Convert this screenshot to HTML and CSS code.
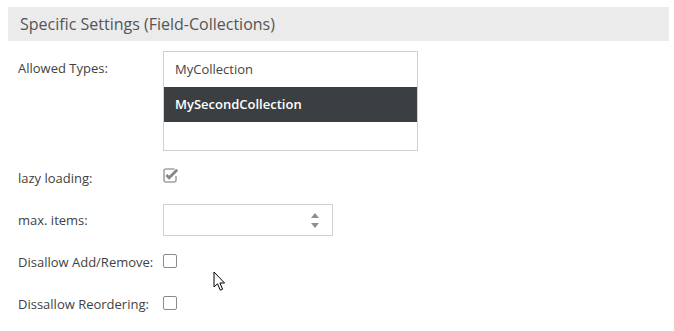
FILE: index.html
```html
<!DOCTYPE html>
<html>
<head>
<meta charset="utf-8">
<link rel="stylesheet" href="styles.css">
</head>
<body>
<div class="panel">
  <div class="panel-header">Specific Settings (Field-Collections)</div>
  <div class="form">
    <div class="row row-list">
      <label class="label label-top">Allowed Types:</label>
      <div class="listbox">
        <div class="option">MyCollection</div>
        <div class="option selected">MySecondCollection</div>
      </div>
    </div>
    <div class="row">
      <label class="label">lazy loading:</label>
      <span class="checkbox checked">
        <svg width="16" height="15" viewBox="0 0 16 15">
          <path d="M11.5 1 H3 A2 2 0 0 0 1 3 V12 A2 2 0 0 0 3 14 H11 A2 2 0 0 0 13 12 V8" fill="none" stroke="#a3a3a3" stroke-width="1.6"/>
          <path d="M3.4 7 L6.2 9.8 L14.2 1.8" fill="none" stroke="#878787" stroke-width="2.8" stroke-linejoin="miter"/>
        </svg>
      </span>
    </div>
    <div class="row">
      <label class="label">max. items:</label>
      <div class="number">
        <span class="spin">
          <svg width="10" height="20" viewBox="0 0 10 20">
            <path d="M5 3 L9 8 L1 8 Z" fill="#8e8e8e"/>
            <path d="M1 13 L9 13 L5 18 Z" fill="#8e8e8e"/>
          </svg>
        </span>
      </div>
    </div>
    <div class="row">
      <label class="label">Disallow Add/Remove:</label>
      <span class="checkbox"></span>
    </div>
    <div class="row">
      <label class="label">Dissallow Reordering:</label>
      <span class="checkbox"></span>
    </div>
  </div>
</div>
<svg class="cursor" width="14" height="22" viewBox="0 0 14 22">
  <path d="M1 1 L1 16 L4.5 12.8 L7.3 19.2 L9.6 18.2 L6.9 12 L11.6 12 Z" fill="#fff" stroke="#000" stroke-width="1" stroke-linejoin="miter"/>
</svg>
</body>
</html>
```

FILE: styles.css
```css
html, body {
  margin: 0;
  padding: 0;
  background: #fff;
}
body {
  padding: 7px 5px 0 8px;
  font-family: "Open Sans", "Liberation Sans", sans-serif;
  font-size: 13px;
  color: #3f3f3f;
  position: relative;
}
.panel-header {
  background: #ebebeb;
  height: 34px;
  line-height: 34px;
  padding-left: 12px;
  font-size: 16px;
  color: #555;
}
.form {
  padding-left: 10px;
}
.row {
  display: flex;
  align-items: center;
  height: 42px;
}
.row-list {
  align-items: flex-start;
  height: 100px;
  margin-top: 10px;
  margin-bottom: 6px;
}
.label {
  width: 145px;
  flex: none;
}
.label-top {
  padding-top: 8px;
}
.listbox {
  width: 253px;
  height: 98px;
  border: 1px solid #d0d0d0;
}
.option {
  height: 35px;
  line-height: 35px;
  padding-left: 11px;
  color: #444;
}
.option.selected {
  background: #3c3f42;
  color: #fff;
  font-weight: 600;
}
.checkbox {
  width: 12px;
  height: 12px;
  border: 1px solid #8a8a8a;
  border-radius: 2px;
  margin-top: -3px;
  background: #fff;
}
.checkbox.checked {
  border: none;
  width: 16px;
  height: 15px;
  margin-top: -5px;
  display: flex;
}
.number {
  width: 168px;
  height: 30px;
  border: 1px solid #d0d0d0;
  display: flex;
  align-items: center;
  justify-content: flex-end;
}
.spin {
  display: flex;
  margin-right: 12px;
}
.cursor {
  position: absolute;
  left: 213px;
  top: 271px;
}
```
